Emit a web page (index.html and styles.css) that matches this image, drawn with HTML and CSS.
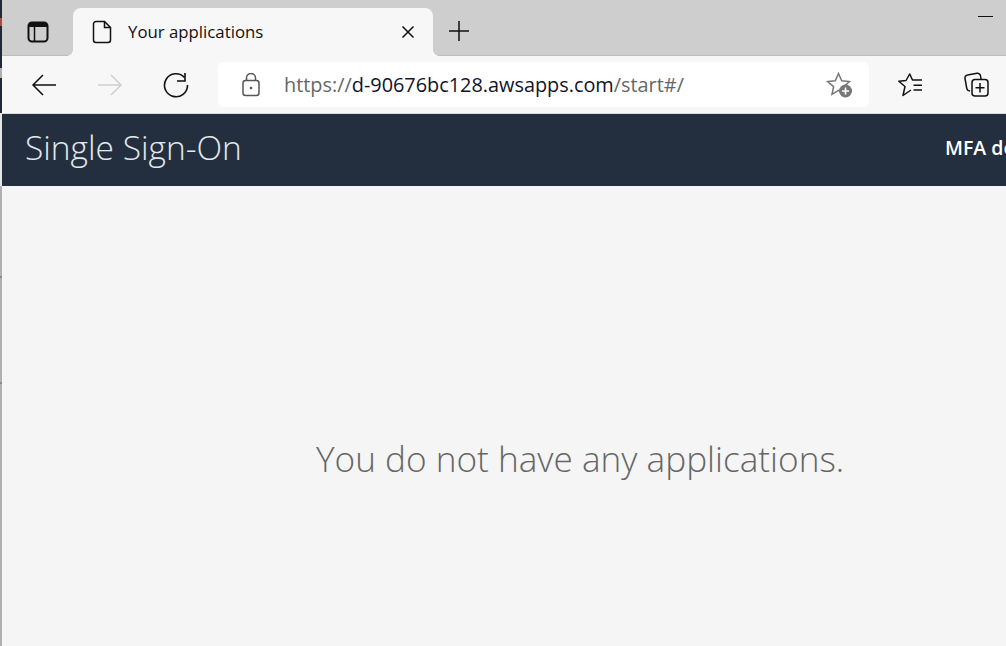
FILE: index.html
```html
<!DOCTYPE html>
<html lang="en">
<head>
<meta charset="utf-8">
<title>Your applications</title>
<link rel="stylesheet" href="styles.css">
</head>
<body>
<div class="desktop-edge"></div>
<div class="window">
  <div class="tabstrip">
    <div class="tab-actions">
      <svg class="icon" width="22" height="22" viewBox="0 0 22 22" fill="none" stroke="#111" stroke-width="2"><rect x="1.500" y="1.500" width="19" height="19" rx="3.500"/><path d="M2 2h18v4H2z" fill="#111" stroke="none"/><path d="M7.500 6v14" stroke-width="1.500"/></svg>
    </div>
    <div class="tab">
      <svg class="icon" width="20" height="24" viewBox="0 0 20 24" fill="none" stroke="#111" stroke-width="1.500"><path d="M4 1.500h8.500l6 6V20a2.500 2.500 0 0 1-2.500 2.500H4A2.500 2.500 0 0 1 1.500 20V4A2.500 2.500 0 0 1 4 1.500z"/><path d="M12.500 1.500V7.500h6"/></svg>
      <span class="tab-title">Your applications</span>
      <svg class="icon tab-close" width="14" height="14" viewBox="0 0 14 14" fill="none" stroke="#111" stroke-width="1.500"><path d="M1.500 1.500l11 11M12.500 1.500l-11 11"/></svg>
    </div>
    <svg class="icon new-tab" width="22" height="22" viewBox="0 0 22 22" fill="none" stroke="#111" stroke-width="1.500"><path d="M11 1v20M1 11h20"/></svg>
    <svg class="icon minimize" width="15" height="1" viewBox="0 0 15 1"><path d="M0 .5h15" stroke="#111" stroke-width="1"/></svg>
  </div>
  <div class="toolbar">
    <div class="nav">
      <svg class="icon" width="26" height="24" viewBox="0 0 26 24" fill="none" stroke="#111" stroke-width="1.500"><path d="M25 12H2M12 2L2 12l10 10"/></svg>
      <svg class="icon" width="26" height="24" viewBox="0 0 26 24" fill="none" stroke="#cfcfcf" stroke-width="1.500"><path d="M1 12h23M14 2l10 10-10 10"/></svg>
      <svg class="icon" width="26" height="26" viewBox="0 0 26 26" fill="none" stroke="#111" stroke-width="1.600"><path d="M21.500 5.500A11.500 11.500 0 1 0 24.500 13"/><path d="M22 1V9H14"/></svg>
    </div>
    <div class="address">
      <svg class="icon" width="18" height="24" viewBox="0 0 18 24" fill="none" stroke="#555" stroke-width="1.500"><rect x="1" y="7.500" width="16" height="15" rx="2.500"/><path d="M4.500 7.500V5a4.500 4.500 0 0 1 9 0v2.500"/><circle cx="9" cy="15" r="1.300" fill="#555" stroke="none"/></svg>
      <span class="url"><span class="url-dim">https://</span><span class="url-host">d-90676bc128.awsapps.com</span><span class="url-dim">/start#/</span></span>
      <svg class="icon add-fav" width="27" height="26" viewBox="0 0 27 26"><path d="M12.500 1.500l3.200 7.200 7.800.8-5.800 5.200 1.500 7.600-6.700-3.900-6.500 3.900 1.600-7.700L1.500 9.500l7.800-.8z" fill="none" stroke="#777" stroke-width="1.500"/><circle cx="19.500" cy="19" r="6.500" fill="#777"/><path d="M19.500 15.500v7M16 19h7" stroke="#fff" stroke-width="1.600"/></svg>
    </div>
    <div class="tools">
      <svg class="icon" width="25" height="24" viewBox="0 0 25 24" fill="none" stroke="#111" stroke-width="1.500" stroke-linejoin="round"><path d="M13 17L5 22.500 7 13.500 .8 8.300 8 7.500 11.700 1 14.500 7H24"/><path d="M15.500 12.300H24M15.500 17H24"/></svg>
      <svg class="icon" width="25" height="25" viewBox="0 0 25 25" fill="none" stroke="#111" stroke-width="1.500"><path d="M6 19A3.500 3.500 0 0 1 2.700 16L1 6.500A3 3 0 0 1 3.500 3L13 1.300A3 3 0 0 1 16.500 3.700L17 7"/><rect x="8" y="7.500" width="16" height="16.500" rx="3"/><path d="M16 11v9.500M11.500 15.750h9"/></svg>
    </div>
  </div>
  <header class="appbar">
    <span class="brand">Single Sign-On</span>
    <span class="nav-link">MFA devices</span>
  </header>
  <main class="content">
    <p class="empty">You do not have any applications.</p>
  </main>
</div>
</body>
</html>
```
FILE: styles.css
```css
html, body {
  margin: 0;
  padding: 0;
  width: 1006px;
  height: 646px;
  overflow: hidden;
  background: #f5f5f5;
}
body {
  display: flex;
}
.desktop-edge {
  flex: none;
  width: 2px;
  height: 646px;
  background: linear-gradient(to bottom,
    #1f2a38 0 18px,
    #b5483c 18px 26px,
    #1f2a38 26px 68px,
    #b0b0b0 68px 78px,
    #1f2a38 78px 113px,
    #e4e4e4 113px 186px,
    #b0b0b0 186px 276px,
    #8a8a8a 276px 278px,
    #b0b0b0 278px 382px,
    #8a8a8a 382px 384px,
    #b0b0b0 384px 646px);
}
.window {
  display: flex;
  flex-direction: column;
  flex: none;
  width: 1004px;
  height: 646px;
  font-family: "Open Sans", "Noto Sans", sans-serif;
}
.icon {
  display: block;
  flex: none;
}
.tabstrip {
  position: relative;
  display: flex;
  align-items: flex-end;
  flex: none;
  height: 56px;
  box-sizing: border-box;
  background: #cecece;
  border-bottom: 1px solid #bdbdbd;
}
.tab-actions {
  display: flex;
  justify-content: center;
  align-items: center;
  width: 71px;
  height: 47px;
}
.tab {
  position: relative;
  display: flex;
  align-items: center;
  width: 360px;
  height: 48px;
  margin-bottom: -1px;
  box-sizing: border-box;
  padding: 0 20px 0 19px;
  background: #f7f7f7;
  border-radius: 8px 8px 0 0;
}
.tab::before,
.tab::after {
  content: "";
  position: absolute;
  bottom: 0;
  width: 6px;
  height: 6px;
}
.tab::before {
  left: -6px;
  background: radial-gradient(circle at 0 0, transparent 5.5px, #f7f7f7 6px);
}
.tab::after {
  right: -6px;
  background: radial-gradient(circle at 100% 0, transparent 5.500px, #f7f7f7 6px);
}
.tab-title {
  flex: 1;
  margin-left: 16px;
  padding-bottom: 2px;
  font-size: 16.800px;
  color: #111;
}
.tab-close {
  margin-right: -2px;
}
.new-tab {
  margin: 0 0 13px 15px;
}
.minimize {
  position: absolute;
  top: 16px;
  right: 13px;
}
.toolbar {
  display: flex;
  align-items: center;
  flex: none;
  height: 58px;
  box-sizing: border-box;
  padding-right: 16px;
  background: #f7f7f7;
  border-bottom: 1px solid #dcdcdc;
}
.nav {
  display: flex;
  align-items: center;
  gap: 40px;
  width: 216px;
  box-sizing: border-box;
  padding-left: 29px;
}
.address {
  display: flex;
  align-items: center;
  width: 651px;
  height: 45px;
  box-sizing: border-box;
  padding: 0 16px 0 24px;
  background: #fff;
  border-radius: 6px;
}
.url {
  flex: 1;
  margin-left: 24px;
  font-size: 19.870px;
  white-space: nowrap;
}
.url-dim {
  color: #666;
}
.url-host {
  color: #12122b;
}
.tools {
  display: flex;
  align-items: center;
  gap: 41px;
  margin-left: 29px;
}
.appbar {
  display: flex;
  align-items: center;
  justify-content: space-between;
  flex: none;
  height: 72px;
  box-sizing: border-box;
  padding: 0 0 5px 23px;
  background: #232f3e;
  overflow: hidden;
}
.brand {
  margin-bottom: 2px;
  font-weight: 300;
  font-size: 33.500px;
  color: #e4e8ec;
}
.nav-link {
  flex: none;
  width: 61px;
  overflow: hidden;
  white-space: nowrap;
  font-size: 19.500px;
  font-weight: 600;
  color: #fff;
}
.content {
  flex: 1;
  display: flex;
  background: #f5f5f5;
}
.empty {
  margin: 248px 0 0 314px;
  font-weight: 300;
  font-size: 35.170px;
  line-height: 48px;
  white-space: nowrap;
  color: #666;
}
```
